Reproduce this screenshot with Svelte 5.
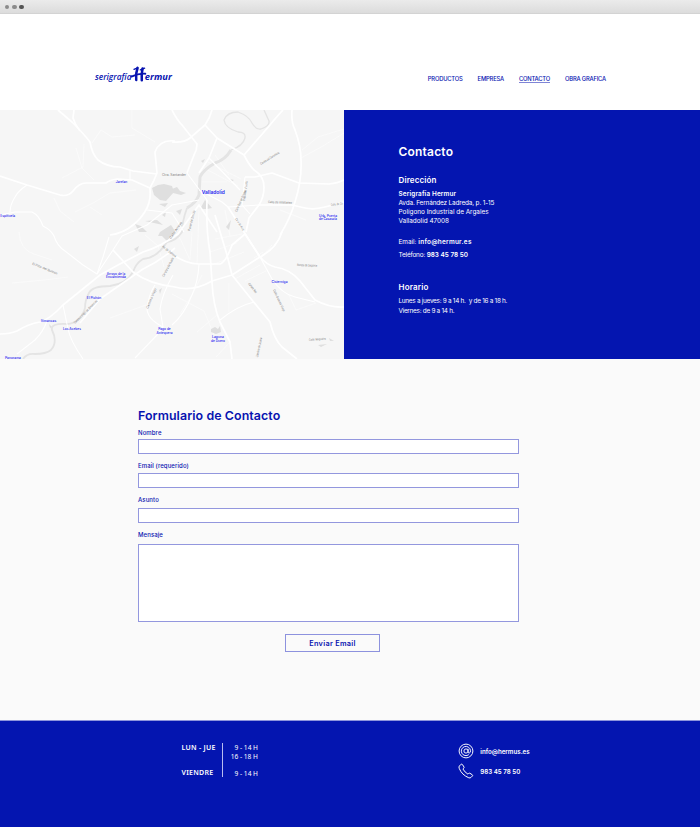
<script>
  const nav = ['PRODUCTOS', 'EMPRESA', 'CONTACTO', 'OBRA GRAFICA'];
  const current = 'CONTACTO';

  const mainRoads = [
    'M58 110L72 122Q84 134 90 142Q92 154 98 160Q107 167 120 167L133 171L157 174',
    'M74 110L73 118Q75 125 80 131',
    'M0 176L27 185L60 195Q68 197 73 191Q79 183 86 183L106 183Q110 180 117 179L132 180L150 188',
    'M175 141Q160 139 155 152Q156 163 157 173Q154 181 150 188Q151 200 147 208Q142 218 133 225Q124 233 110 235',
    'M172 110Q177 120 182 125L197 144Q197 150 194 155L187 173',
    'M172 142Q184 143 190 138L205 125Q210 118 212 110',
    'M205 125L217 138L244 155Q249 165 254 170Q264 176 264 187Q264 197 259 205L249 218L246 232',
    'M217 138L209 158L199 173',
    'M244 155L270 125Q273 121 283 110',
    'M292 110Q291 122 295 130Q301 146 301 160Q302 180 295 202Q290 219 280 235',
    'M245 177L255 177L272 173L299 183L329 184Q338 183 344 180',
    'M259 205L292 205L305 208Q314 210 325 207L344 202',
    'M0 334Q10 334 17 331Q28 324 40 322Q50 319 63 305L100 275L118 265L143 252Q160 247 178 234L199 205L217 232',
    'M80 323L100 299L143 269Q160 261 175 248',
    'M113 250L133 272Q149 284 175 287Q193 292 212 281L232 275L260 257Q277 248 282 232',
    'M207 200Q206 232 210 252L212 282Q213 305 220 322L230 342L232 359',
    'M172 254Q186 264 199 264L220 264Q226 262 232 245L245 234L260 257',
    'M215 215L227 255L232 275L252 300L270 322Q274 339 282 347L297 359',
    'M228 207L244 232L260 257Q267 265 275 267Q290 269 300 281L315 300Q330 308 344 307',
  ];
  const minorRoads = [
    'M27 185Q18 191 15 197Q10 205 10 212',
    'M0 215L15 212L32 212Q39 215 43 226Q51 230 54 236Q57 246 65 251L83 265L97 274L103 257L109 237',
    'M63 305L68 329Q70 340 83 359',
    'M47 321Q43 332 35 340L17 354',
    'M135 358L157 335L163 327Q147 319 147 308Q149 294 155 285',
    'M163 327L160 309Q162 294 173 275',
    'M260 257L272 279Q282 294 295 297L315 302',
    'M220 320Q237 306 254 302',
    'M199 264Q198 282 192 295Q184 315 172 325',
    'M130 171L130 180M147 210L172 213L184 232M245 177L242 205L250 214',
    'M199 190L222 202L228 207L259 205M209 158L240 190M187 173L207 200',
    'M97 274L113 250L122 236L147 225L172 205L199 200',
  ];
  const faintRoads = [
    'M62 178L83 167L84 144M92 143L101 130L112 137L135 135M76 148L82 168L94 180',
    'M54 198L60 211L74 222M75 212L93 203L110 193L136 190M90 207L102 215',
    'M132 110L132 128L155 142M12 283L44 280L68 277M19 232Q20 250 34 254L52 260',
    'M301 158L323 146L344 133M280 210L306 220M302 150L318 137L344 129',
    'M210 252L237 243M212 265L244 252M215 239L242 234M225 210L230 236',
    'M206 161L241 179M204 168L238 186M215 155L229 175M201 182L227 182',
    'M235 279L260 265M254 258L263 252M261 258L272 245M245 281L266 271',
    'M172 294L204 311L214 335M110 318L146 305M180 314L192 295L202 275',
    'M192 232L190 260M199 210L197 264M178 234L190 260M145 235L158 246L164 267',
    'M289 295L296 310L316 303M217 315L197 332M230 342L216 357M229 283L229 312',
  ];
  const blocks = [
    'M152 188L158 185L164 184L172 186L174 192L166 201L160 200L154 195Z',
    'M200 209L205 200L212 208L207 209Z',
    'M135 224L141 226L147 232L139 232Z',
    'M145 221L157 220L163 225L154 223Z',
    'M160 232L171 225L175 231L167 241L162 236L158 236Z',
    'M159 204L168 203L165 207Z',
    'M172 189L177 187L180 191L186 193L181 195L173 193Z',
    'M176 211L182 209L180 215Z',
    'M162 215L166 212L165 217Z',
    'M134 249L139 246L137 252Z',
    'M159 290L162 288L160 294Z',
    'M211 329L215 327L218 329L220 326L221 332L216 334L211 332Z',
    'M226 227L231 220L229 230Z',
    'M230 179L234 180L231 182Z',
    'M318 345L327 344L321 347Z',
    'M329 338L334 341L330 341Z',
    'M49 324L52 327L50 328Z',
    'M201 161L205 159L203 163Z',
  ];
  const streets = [
    ['Ctra. Santander', 162, 175.5, 24, 0],
    ['Camino del Cementerio', 261, 165, 22, -32],
    ['Calle Real de Burgos', 237, 212, 23, -66],
    ['Paseo San Vicente', 245, 201, 20, -82],
    ['Calle de Villabáñez', 268, 203, 24, 2],
    ['Calle de Co', 331, 206, 12, -8],
    ['Calle de Arca', 235, 219, 14, 57],
    ['Paseo de Zorrilla', 190, 231, 21, -75],
    ['El Pico del Buitrón', 32, 264.5, 27, 22],
    ['Camino Viejo de Simancas', 75, 324, 32, -45],
    ['Camino Viejo', 148, 309, 22, -67],
    ['Carretera de Rueda', 164, 277, 21, -62],
    ['Av. de Zamora', 162, 247, 17, 38],
    ['Cañada Real', 248, 284, 12, 51],
    ['Calle Guarda Viejo', 273, 290, 24, 65],
    ['Ronda de Segovia', 297, 266, 20, 2],
    ['Calle Nogueira', 309, 341, 17, -5],
    ['Camino de Juana', 258, 357.5, 20, -78],
    ['Calle Arroyo', 171, 239, 20, -55],
  ];
  const places = [
    ['Jarelan', 121.5, 182.5, 11.5],
    ['Espiñuela', 7.7, 216.5, 15],
    ['Urb. Puerta', 328, 216.8, 18],
    ['de Casasola', 328, 220.2, 18],
    ['Arroyo de la', 116, 274.7, 18.5],
    ['Encomienda', 116, 278.2, 20],
    ['El Pichón', 94, 298.8, 14.5],
    ['Cisterniga', 279.5, 282.8, 16],
    ['Simancas', 48.5, 322.2, 15.5],
    ['Los Acebes', 72, 329.8, 18],
    ['Pago de', 164.5, 330.3, 12.5],
    ['Antequera', 164.5, 333.9, 16],
    ['Laguna', 218, 338.3, 12],
    ['de Duero', 218, 341.8, 14],
    ['Panorama', 13, 358.5, 16],
  ];
  const fields = [
    ['Nombre', 'nombre'],
    ['Email (requerido)', 'email'],
    ['Asunto', 'asunto'],
  ];
</script>

<div class="page">
  <div class="chrome"><i></i><i></i><i class="dark"></i></div>

  <header>
    <svg class="logo" viewBox="0 0 80 22" width="80" height="22" role="img" aria-label="serigrafía Hermur">
      <text x="1" y="14.5" textLength="36.5" lengthAdjust="spacingAndGlyphs">serigrafía</text>
      <g fill="none" stroke="#0713b0" stroke-linecap="round">
        <path d="M43.6 2.8Q41.6 8 42.2 15" stroke-width="2.5" />
        <path d="M48.6 3.4Q47.2 9 47.8 15.3" stroke-width="2.5" />
        <path d="M37.3 11.6Q44 8.4 51.3 8.7" stroke-width="1.9" />
        <path d="M40 4.3L43.6 2.9M46.4 4.9L50.6 3.2" stroke-width="1.4" />
      </g>
      <text x="50.8" y="14.5" textLength="27" lengthAdjust="spacingAndGlyphs" class="heavy">ermur</text>
    </svg>
    <nav>
      {#each nav as item}
        <a href="#top" class:current={item === current}>{item}</a>
      {/each}
    </nav>
  </header>

  <section class="intro">
    <svg class="map" viewBox="0 110 344 249" width="344" height="249">
      <rect y="110" width="344" height="249" fill="#f6f6f6" />
      <g fill="none" stroke="#fbfbfb" stroke-width=".8">
        {#each faintRoads as d}<path {d} />{/each}
      </g>
      <g fill="#dfdfdf">
        {#each blocks as d}<path {d} />{/each}
      </g>
      <g fill="none" stroke="#e4e4e4" stroke-linejoin="round">
        <path stroke-width="1.3" d="M231 150Q243 146 245 138Q246 132 238 132Q225 128 224 120Q227 112 238 112Q249 116 252 123Q256 130 261 129Q270 126 269 121L264 110" />
        <path stroke-width="3" d="M231 150Q225 160 215 163Q203 170 200 177L199 195Q196 203 187 208" />
        <path stroke-width="1.8" d="M187 208Q182 222 182 232Q176 241 167 242Q157 258 143 259Q136 263 133 272Q126 284 110 286Q92 286 89 293Q85 300 85 308Q81 323 67 324Q50 323 52 330Q58 342 51 350Q46 354 35 354Q27 353 23 359" />
      </g>
      <g fill="none" stroke="#fff" stroke-width="1.1" stroke-linejoin="round">
        {#each minorRoads as d}<path {d} />{/each}
      </g>
      <g fill="none" stroke="#fff" stroke-width="1.7" stroke-linejoin="round">
        {#each mainRoads as d}<path {d} />{/each}
      </g>
      <g class="street">
        {#each streets as [name, x, y, w, a]}
          <text {x} {y} textLength={w} lengthAdjust="spacingAndGlyphs" transform="rotate({a} {x} {y})">{name}</text>
        {/each}
      </g>
      <g class="place">
        {#each places as [name, x, y, w]}
          <text {x} {y} textLength={w} lengthAdjust="spacingAndGlyphs">{name}</text>
        {/each}
        <text x="213.3" y="193.8" class="city" textLength="23" lengthAdjust="spacingAndGlyphs">Valladolid</text>
      </g>
    </svg>

    <div class="info">
      <h1>Contacto</h1>
      <h2>Dirección</h2>
      <p class="address">
        <b>Serigrafía Hermur</b><br /><span class="street-line">Avda. Fernández Ladreda, p. 1-15</span><br />Polígono Industrial de Argales<br />Valladolid 47008
      </p>
      <p class="reach">Email: <b>info@hermur.es</b></p>
      <p class="phone">Teléfono: <b>983 45 78 50</b></p>
      <h2 class="hours">Horario</h2>
      <p class="times">Lunes a jueves: 9 a 14 h.&nbsp; y de 16 a 18 h.<br />Viernes: de 9 a 14 h.</p>
    </div>
  </section>

  <main>
    <form onsubmit={(e) => e.preventDefault()}>
      <h2>Formulario de Contacto</h2>
      {#each fields as [label, id]}
        <label for={id} class={id}>{label}</label>
        <input {id} />
      {/each}
      <label for="mensaje" class="mensaje">Mensaje</label>
      <textarea id="mensaje"></textarea>
      <button>Enviar Email</button>
    </form>
  </main>

  <footer>
    <div class="schedule">
      <div class="days"><span>LUN - JUE</span><span>VIENDRE</span></div>
      <div class="slots"><span>9 - 14 H</span><span>16 - 18 H</span><span>9 - 14 H</span></div>
    </div>
    <div class="contact">
      <div class="line">
        <svg viewBox="0 0 16 16" width="16" height="16" fill="none" stroke="#fff" stroke-width=".95">
          <circle cx="8" cy="8" r="6.9" />
          <circle cx="8" cy="8" r="2.1" />
          <path d="M10.1 5.7V8.8Q10.2 10.2 11.2 10.1Q12.6 9.7 12.5 7.7A4.6 4.6 0 1 0 10.8 11.6" />
        </svg>
        <span>info@hermus.es</span>
      </div>
      <div class="line">
        <svg viewBox="0 0 16 16" width="16" height="16" fill="none" stroke="#fff" stroke-width="1" stroke-linejoin="round">
          <path d="M1.3 3.1L3.2 1.2Q3.9.8 4.4 1.5L6 4Q6.3 4.7 5.7 5.2L4.9 6Q6.8 9.3 9.9 11.1L10.7 10.4Q11.3 9.9 12 10.3L14.3 11.8Q15 12.4 14.4 13L12.9 14.5Q12.1 15.2 10.8 14.8Q3.7 11.8 1.2 5.3Q.7 3.9 1.3 3.1Z" />
        </svg>
        <span>983 45 78 50</span>
      </div>
    </div>
  </footer>
</div>

<style>
  :global(body) {
    margin: 0;
  }
  .page {
    width: 700px;
    height: 827px;
    overflow: hidden;
    background: #fff;
    font-family: Inter, 'Liberation Sans', sans-serif;
    color: #0713b0;
    display: flex;
    flex-direction: column;
  }
  h1,
  h2,
  p {
    margin: 0;
  }
  .chrome {
    height: 14px;
    box-sizing: border-box;
    border-bottom: 1px solid #d3d3d3;
    background: linear-gradient(#ebebeb, #dcdcdc);
    display: flex;
    align-items: center;
    gap: 2.7px;
    padding: 1px 0 0 4.8px;
  }
  .chrome i {
    width: 4.6px;
    height: 4.6px;
    border-radius: 50%;
    background: #8b8b8b;
  }
  .chrome .dark {
    background: #555;
  }
  header {
    height: 96px;
    display: flex;
    justify-content: space-between;
    padding: 0 94px;
    box-sizing: border-box;
  }
  .logo {
    margin-top: 51px;
    font: italic 600 9px 'Open Sans', sans-serif;
    fill: #0713b0;
  }
  .heavy {
    font-weight: 700;
  }
  nav {
    display: flex;
    gap: 15px;
    padding-top: 61px;
    font-size: 5.8px;
    line-height: 8px;
    font-weight: 500;
    letter-spacing: -0.18px;
  }
  nav a {
    color: inherit;
    text-decoration: none;
    height: 7px;
  }
  nav .current {
    border-bottom: 1px solid #7f85d6;
  }
  .intro {
    display: flex;
    height: 249px;
    background: #0415b0;
  }
  .map {
    display: block;
    font-family: Inter, sans-serif;
  }
  .street {
    font-size: 3.2px;
    fill: #808080;
  }
  .place {
    font-size: 3.6px;
    font-weight: 500;
    fill: #1a1af0;
    text-anchor: middle;
  }
  .city {
    font-size: 5px;
    font-weight: 600;
  }
  .info {
    padding-left: 54.5px;
    color: #fff;
    font-size: 6.4px;
    line-height: 9.2px;
  }
  .info h1 {
    margin-top: 33px;
    font-size: 12px;
    line-height: 18px;
    font-weight: 600;
    letter-spacing: 0.2px;
  }
  .info h2 {
    margin-top: 13px;
    font-size: 8px;
    line-height: 12px;
    font-weight: 600;
    letter-spacing: 0.15px;
  }
  .address {
    margin-top: 3.6px;
  }
  .street-line {
    letter-spacing: -0.14px;
  }
  .reach {
    margin-top: 11.5px;
  }
  .reach b {
    letter-spacing: 0.27px;
  }
  .phone {
    margin-top: 4px;
    letter-spacing: -0.17px;
  }
  .phone b {
    letter-spacing: 0;
  }
  .info .hours {
    margin-top: 21px;
    letter-spacing: 0.2px;
  }
  .times {
    margin-top: 4px;
    letter-spacing: -0.27px;
  }
  b {
    font-weight: 600;
  }
  .address b {
    letter-spacing: 0.15px;
  }
  main {
    height: 361px;
    background: #fafafa;
    display: flex;
  }
  form {
    display: flex;
    flex-direction: column;
    width: 381px;
    margin-left: 138px;
  }
  form h2 {
    margin-top: 48px;
    font-size: 12.4px;
    line-height: 18px;
    font-weight: 600;
    letter-spacing: 0.08px;
  }
  label {
    font-size: 6px;
    line-height: 8px;
    font-weight: 500;
    margin: 4px 0 2px;
    letter-spacing: 0.1px;
  }
  .email {
    margin: 8px 0 3px;
  }
  .asunto {
    margin: 8px 0 4px;
  }
  .mensaje {
    margin: 8px 0 5px;
  }
  input,
  textarea {
    box-sizing: border-box;
    width: 381px;
    height: 15px;
    border: 1px solid #9397de;
    border-radius: 0;
    background: #fff;
    padding: 0;
    margin: 0;
    resize: none;
    outline: none;
  }
  textarea {
    height: 78px;
  }
  button {
    align-self: flex-start;
    box-sizing: border-box;
    width: 95px;
    height: 18px;
    margin: 12px 0 0 147px;
    padding: 0;
    border: 1px solid #8d92de;
    background: none;
    color: inherit;
    font: 600 7.3px Inter, sans-serif;
    letter-spacing: 0.3px;
  }
  footer {
    box-sizing: border-box;
    height: 107px;
    background: #0415b0;
    border-top: 1px solid #8f95dc;
    color: #fff;
    display: flex;
  }
  .schedule {
    display: flex;
    margin: 22px 0 0 181.5px;
    height: 34px;
    font: 6.6px/9px 'Noto Sans', sans-serif;
  }
  .days {
    box-sizing: border-box;
    width: 41px;
    display: flex;
    flex-direction: column;
    justify-content: space-between;
    font-weight: 600;
    font-size: 7px;
    letter-spacing: 0.27px;
    border-right: 1px solid #b9bdf0;
  }
  .slots {
    width: 35.5px;
    display: flex;
    flex-direction: column;
    text-align: right;
  }
  .slots span:last-child {
    margin-top: 7.5px;
  }
  .contact {
    margin: 22px 0 0 200.3px;
    display: flex;
    flex-direction: column;
    gap: 4px;
    font-size: 6.2px;
    font-weight: 600;
  }
  .line {
    display: flex;
    align-items: center;
    gap: 6px;
  }
  .line svg {
    display: block;
  }
</style>
